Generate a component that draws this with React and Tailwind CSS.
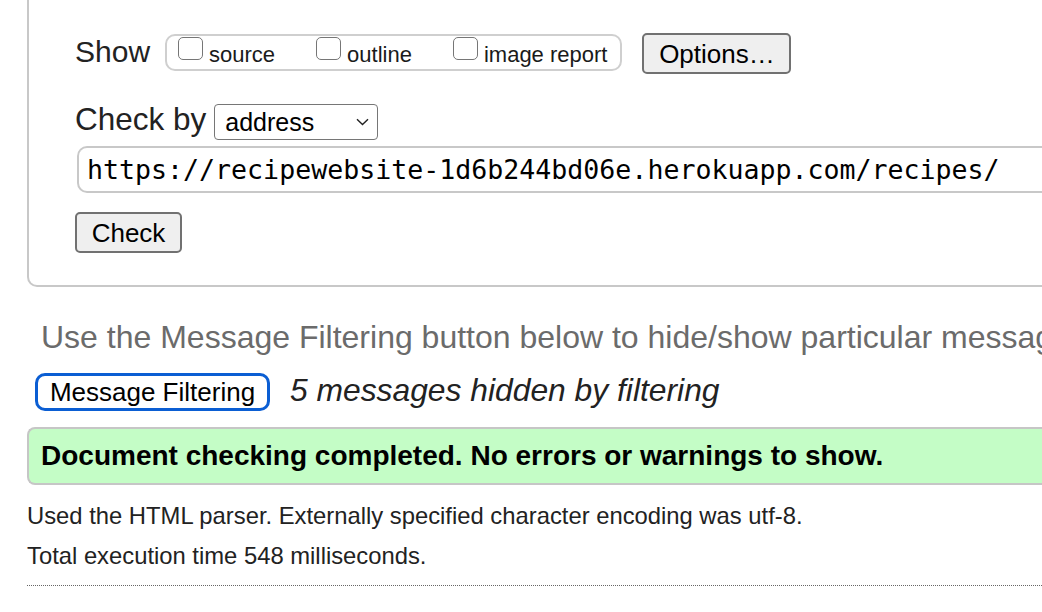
import React from 'react';

const sans = { fontFamily: '"Liberation Sans", Arial, Helvetica, sans-serif' };

// Checkbox + label inside the "Show" group
const ShowOption = ({ label, last }) => {
  return (
    <label className={`flex items-start ${last ? 'mr-[13px]' : 'mr-[41px]'}`}>
      <span className="w-[25px] h-[23px] rounded-[5px] border-[1.5px] border-[#767676] bg-white" />
      <span className="ml-[6px] mt-[7px] text-[22px] leading-none text-[#1a1a1a] whitespace-nowrap">
        {label}
      </span>
    </label>
  );
};

const GrayButton = ({ children, className = '' }) => {
  return (
    <button
      className={`h-[41px] rounded-[5px] border-2 border-[#717171] bg-[#efefef] text-[26px] leading-none text-black flex items-center justify-center ${className}`}
    >
      {children}
    </button>
  );
};

const App = () => {
  return (
    <div className="w-[1042px] h-[612px] overflow-hidden bg-white text-[#222]" style={sans}>
      <div className="w-[1160px] pl-[27px]">
        {/* Form panel, top edge is scrolled out of view */}
        <div className="border-2 border-t-0 border-[#c8c8c8] rounded-bl-[10px] pl-[46px] pb-[32px]">
          {/* Show row */}
          <div className="flex items-start pt-[33px] h-[74px]">
            <span className="mt-[4px] text-[30px] leading-none">Show</span>
            <div className="ml-[15px] mt-[1px] h-[37px] flex items-start pt-[1px] pl-[11px] border-2 border-[#cfcfcf] rounded-[10px]">
              <ShowOption label="source" />
              <ShowOption label="outline" />
              <ShowOption label="image report" last />
            </div>
            <GrayButton className="ml-[20px] w-[149px]">Options…</GrayButton>
          </div>

          {/* Check by row */}
          <div className="flex items-start mt-[30px] h-[36px]">
            <span className="text-[31.5px] leading-none whitespace-nowrap">Check by</span>
            <div className="ml-[8px] w-[164px] h-[36px] flex items-center justify-between pl-[10px] pr-[8px] border-[1.5px] border-[#767676] rounded-[4px] bg-white">
              <span className="text-[25px] leading-none text-black">address</span>
              <svg width="13" height="8" viewBox="0 0 13 8" fill="none">
                <path d="M1 1.2 L6.5 6.5 L12 1.2" stroke="#222" strokeWidth="1.4" />
              </svg>
            </div>
          </div>

          {/* URL input */}
          <div
            className="mt-[6px] ml-[2px] h-[47px] flex items-center pt-[1px] pl-[8px] border-2 border-r-0 border-[#c8c8c8] rounded-l-[10px] text-[26.6px] leading-none text-black whitespace-nowrap"
            style={{ fontFamily: '"DejaVu Sans Mono", "Liberation Mono", monospace' }}
          >
            https://recipewebsite-1d6b244bd06e.herokuapp.com/recipes/
          </div>

          <GrayButton className="mt-[19px] w-[107px]">Check</GrayButton>
        </div>

        {/* Filtering hint */}
        <p className="mt-[34px] pl-[14px] text-[32px] leading-none text-[#6b6b6b] whitespace-nowrap">
          Use the Message Filtering button below to hide/show particular messages.
        </p>

        <div className="flex items-start mt-[18px] h-[40px]">
          <button className="ml-[8px] mt-[2px] w-[235px] h-[38px] rounded-[10px] border-[3px] border-[#0b5ed3] bg-white text-[26px] leading-none text-black flex items-center justify-center">
            Message Filtering
          </button>
          <span className="ml-[20px] mt-[4px] text-[31.8px] leading-none italic text-[#222] whitespace-nowrap">
            5 messages hidden by filtering
          </span>
        </div>

        {/* Result */}
        <div className="mt-[16px] h-[58px] flex items-center pl-[12px] border-2 border-r-0 border-[#c6c6c6] rounded-l-[8px] bg-[#c4fdc6]">
          <span className="text-[28px] leading-none font-bold text-black whitespace-nowrap">
            Document checking completed. No errors or warnings to show.
          </span>
        </div>

        <p className="mt-[19px] text-[23.8px] leading-none text-[#222] whitespace-nowrap">
          Used the HTML parser. Externally specified character encoding was utf-8.
        </p>
        <p className="mt-[16px] text-[23.8px] leading-none text-[#222] whitespace-nowrap">
          Total execution time 548 milliseconds.
        </p>

        <div className="mt-[17px] border-t border-dotted border-[#666]" />
      </div>
    </div>
  );
};

export default App;
